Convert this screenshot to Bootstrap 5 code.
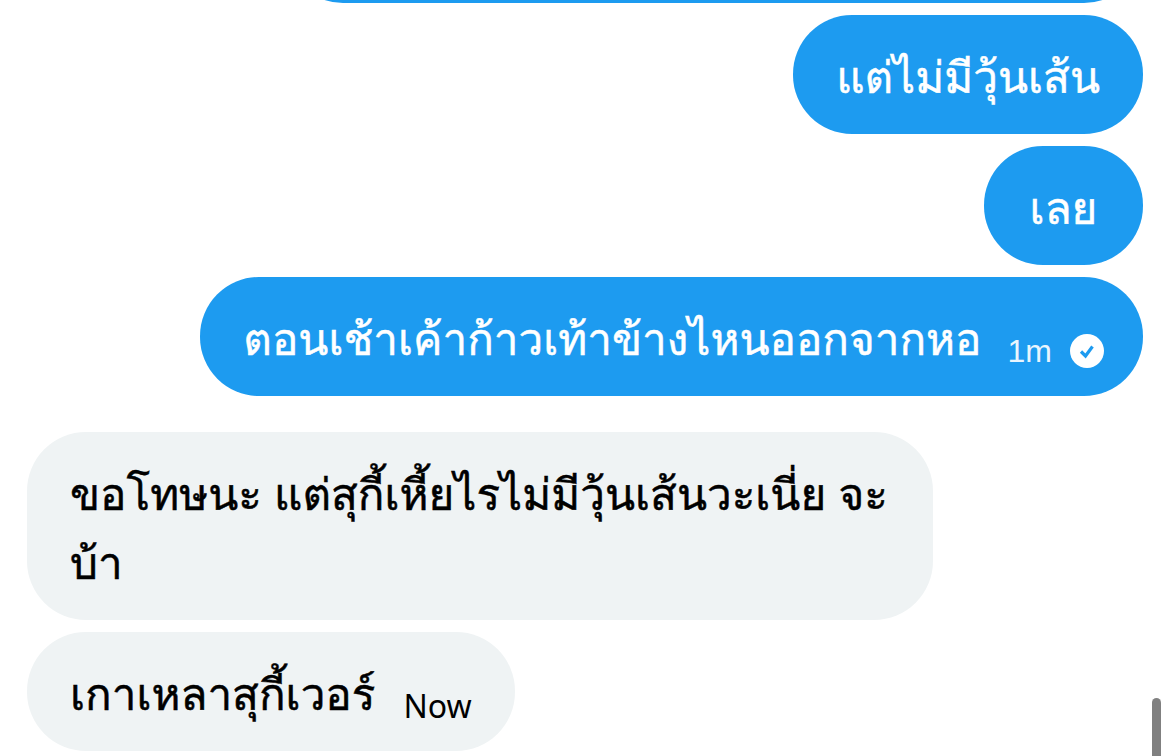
<!DOCTYPE html>
<html lang="th">
<head>
<meta charset="utf-8">
<meta name="viewport" content="width=device-width, initial-scale=1">
<title>Messages</title>
<link href="https://cdn.jsdelivr.net/npm/bootstrap@5.3.0/dist/css/bootstrap.min.css" rel="stylesheet">
<script src="https://cdn.jsdelivr.net/npm/bootstrap@5.3.0/dist/js/bootstrap.bundle.min.js"></script>
<style>
body{background:#fff;font-family:"Liberation Sans",Loma,sans-serif}
.thread{padding:0 27px 5px;gap:12px}
.bubble{min-width:159px;min-height:119px;padding:28px 43px 22px;border-radius:59px;font-size:44px;line-height:69px}
.sent{background:#1d9bf0;color:#fff}
.received{background:#eff3f4;color:#000;max-width:81.2%}
.received-first{margin-top:24px}
.earlier{width:77%}
.body-text{-webkit-text-stroke:.5px currentColor}
.stamp{font-size:32px;line-height:36px;margin:0 0 5px 28px}
.sent-stamp{gap:18px;margin-left:26px;color:#e8f5fe}
.received-stamp{font-family:"Noto Sans",sans-serif}
.with-mark{padding-right:39px}
.scroll-thumb{right:9px;bottom:0;width:9px;height:58px;background:#808080;border-radius:5px 5px 0 0}
</style>
</head>
<body>
<main class="thread position-relative d-flex flex-column justify-content-end vh-100 overflow-hidden">
  <div class="bubble sent earlier align-self-end flex-shrink-0"></div>
  <div class="bubble sent align-self-end flex-shrink-0"><span class="body-text">แต่ไม่มีวุ้นเส้น</span></div>
  <div class="bubble sent text-center align-self-end flex-shrink-0"><span class="body-text">เลย</span></div>
  <div class="bubble sent with-mark d-flex align-items-end align-self-end flex-shrink-0">
    <span class="body-text">ตอนเช้าเค้าก้าวเท้าข้างไหนออกจากหอ</span>
    <span class="stamp sent-stamp d-flex align-items-center"><span>1m</span>
      <svg width="34" height="34" viewBox="0 0 34 34" role="img" aria-label="Sent"><circle cx="17" cy="17" r="17" fill="#fff"/><path d="M11 17.500l4.500 4.500 7-9.500" fill="none" stroke="#1d9bf0" stroke-width="3.200"/></svg>
    </span>
  </div>
  <div class="bubble received received-first align-self-start flex-shrink-0"><span class="body-text">ขอโทษนะ แต่สุกี้เหี้ยไรไม่มีวุ้นเส้นวะเนี่ย จะบ้า</span></div>
  <div class="bubble received d-flex align-items-end align-self-start flex-shrink-0">
    <span class="body-text">เกาเหลาสุกี้เวอร์</span>
    <span class="stamp received-stamp">Now</span>
  </div>
  <div class="scroll-thumb position-absolute"></div>
</main>
</body>
</html>
